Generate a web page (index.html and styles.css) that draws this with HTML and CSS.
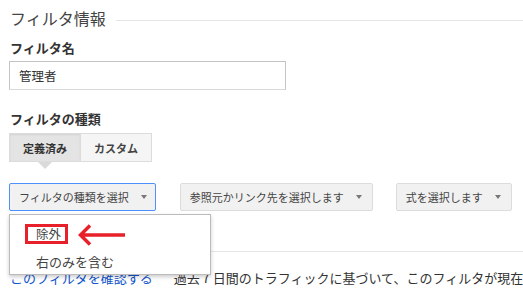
FILE: index.html
```html
<!DOCTYPE html>
<html lang="ja">
<head>
  <meta charset="UTF-8">
  <meta name="viewport" content="width=device-width, initial-scale=1.0">
  <title>フィルタ情報</title>
  <link rel="stylesheet" href="styles.css">
</head>
<body>
<div class="title">
  <span>フィルタ情報</span>
  <span class="title-line"></span>
</div>

<label class="field-label">フィルタ名</label>
<input class="text-input" type="text" value="管理者">

<label class="field-label type-label">フィルタの種類</label>
<div class="toggle">
  <button class="toggle-btn active">定義済み</button>
  <button class="toggle-btn">カスタム</button>
</div>

<div class="selects">
  <div class="select-wrap">
    <div class="select focused">フィルタの種類を選択<span class="caret"></span></div>
    <div class="menu">
      <div class="menu-item"><span class="marked">除外</span></div>
      <div class="menu-item">右のみを含む</div>
      <!-- 注釈の矢印 -->
      <svg class="pointer" width="60" height="24" viewBox="0 0 60 24">
        <path d="M4 11 H48 M13 1.5 L3.5 11 L13 20.5" fill="none" stroke="#e8202a" stroke-width="3.5"/>
      </svg>
    </div>
  </div>
  <div class="select">参照元かリンク先を選択します<span class="caret"></span></div>
  <div class="select">式を選択します<span class="caret"></span></div>
</div>

<div class="divider"></div>

<div class="verify">
  <a href="#" class="link">このフィルタを確認する</a>
  <span class="note">過去 7 日間のトラフィックに基づいて、このフィルタが現在</span>
</div>
</body>
</html>
```

FILE: styles.css
```css
body {
  margin: 0;
  padding: 0 9px;
  width: 505px;
  height: 299px;
  overflow: hidden;
  background: #fff;
  font-family: "Noto Sans CJK JP", "Noto Sans", sans-serif;
  color: #333;
}
.title {
  display: flex;
  align-items: flex-start;
  gap: 10px;
  margin-top: 9px;
  margin-right: -9px;
  font-size: 16px;
  line-height: 18px;
  color: #444;
}
.title span:first-child { padding-left: 1px; }
.title-line {
  flex: 1;
  margin-top: 11px;
  border-top: 1px solid #e5e5e5;
}
.field-label {
  display: block;
  margin-top: 13px;
  padding-left: 1px;
  font-size: 13px;
  line-height: 16px;
  font-weight: bold;
  color: #333;
}
.type-label { margin-top: 21px; }
.text-input {
  display: block;
  box-sizing: border-box;
  width: 277px;
  height: 29px;
  margin-top: 5px;
  padding: 0 9px;
  border: 1px solid #c4c4c4;
  border-bottom-color: #d9d9d9;
  font-family: inherit;
  font-size: 12.5px;
  color: #333;
  outline: none;
}
.toggle {
  display: flex;
  margin-top: 6px;
}
.toggle-btn {
  position: relative;
  box-sizing: border-box;
  width: 72px;
  height: 29px;
  padding: 0;
  border: 1px solid #dcdcdc;
  background: #f5f5f5;
  font-family: inherit;
  font-size: 11px;
  font-weight: bold;
  color: #444;
}
.toggle-btn + .toggle-btn { margin-left: -1px; }
.toggle-btn.active {
  background: #e4e4e4;
  box-shadow: inset 0 1px 2px rgba(0,0,0,0.08);
  color: #333;
}
.toggle-btn.active::after {
  content: "";
  position: absolute;
  left: 28px;
  bottom: -8px;
  border-left: 7px solid transparent;
  border-right: 7px solid transparent;
  border-top: 7px solid #dadada;
}
.selects {
  display: flex;
  gap: 23px;
  margin-top: 21px;
}
.select-wrap {
  position: relative;
  margin-right: 1px;
}
.select {
  display: flex;
  align-items: center;
  gap: 12px;
  box-sizing: border-box;
  height: 28px;
  padding: 0 10px 0 9px;
  border: 1px solid #dcdcdc;
  border-radius: 2px;
  background: #f1f1f1;
  font-size: 11px;
  color: #444;
  white-space: nowrap;
}
.select.focused {
  border-color: #4d90fe;
  padding-right: 8px;
}
.caret {
  border-left: 3.5px solid transparent;
  border-right: 3.5px solid transparent;
  border-top: 4px solid #777;
}
.menu {
  position: absolute;
  top: 31px;
  left: 0;
  box-sizing: border-box;
  width: 202px;
  height: 61px;
  padding: 5px 0;
  border: 1px solid #bbb;
  background: #fff;
  box-shadow: 0 2px 4px rgba(0,0,0,0.2);
  z-index: 2;
}
.menu-item {
  height: 28px;
  line-height: 28px;
  padding-left: 26px;
  font-size: 13px;
  color: #444;
}
.marked {
  display: inline-block;
  margin-left: -11px;
  padding: 0 4px 0 8px;
  font-size: 12.5px;
  line-height: 14px;
  border: 3px solid #e8202a;
  vertical-align: middle;
  position: relative;
  top: -1px;
}
.pointer {
  position: absolute;
  left: 67px;
  top: 9px;
}
.divider {
  margin-top: 40px;
  margin-right: -9px;
  border-top: 1px solid #e5e5e5;
}
.verify {
  margin-top: 18px;
  padding-left: 1px;
  font-size: 13px;
  line-height: 16px;
  white-space: nowrap;
}
.link {
  color: #15c;
  text-decoration: none;
}
.note {
  margin-left: 18px;
  color: #333;
}
```
